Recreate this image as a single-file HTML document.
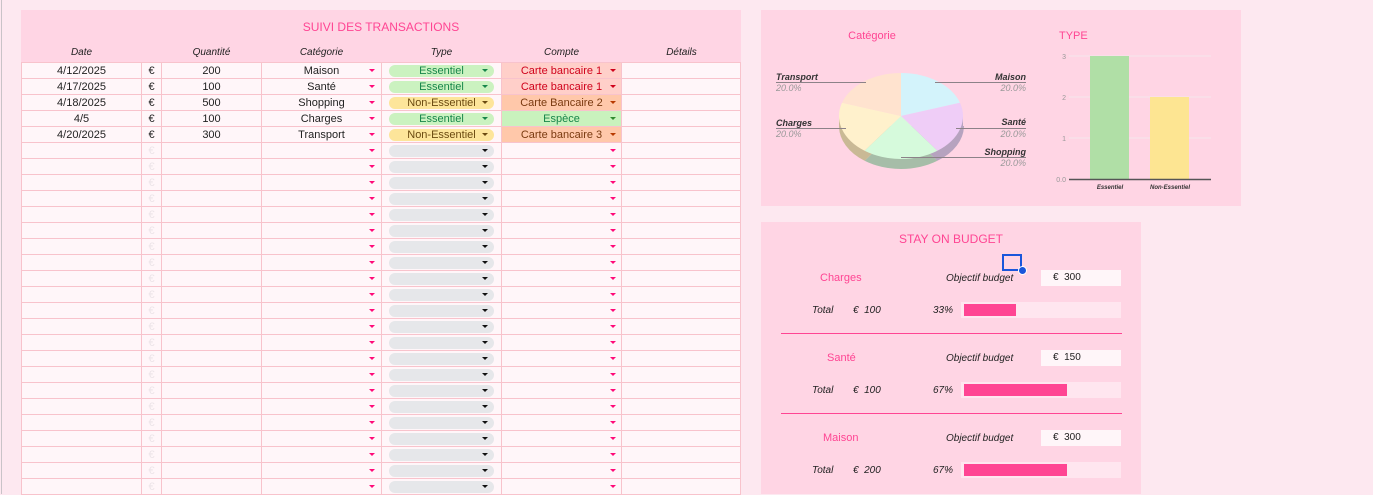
<!DOCTYPE html>
<html><head><meta charset="utf-8"><style>
*{margin:0;padding:0;box-sizing:border-box}
body{width:1373px;height:494px;overflow:hidden;background:#fde8f0;font-family:"Liberation Sans",sans-serif;position:relative;color:#222}
.abs{position:absolute}
#gl{left:1px;top:0;width:1px;height:494px;background:#c9c3c8}
#tp{left:21px;top:10px;width:720px;height:484px;background:#ffd5e4}
.title{color:#ff4593;font-size:12px;text-align:center}
.hdr{font-style:italic;font-size:10px;top:47px;text-align:center}
.row{position:absolute;left:21px;width:720px;height:17px;display:flex}
.row div{border:1px solid #f8c3cc;margin-right:-1px;margin-bottom:-1px;background:#fff6f9;height:17px;font-size:11px;text-align:center;line-height:16px;position:relative}
.c1{width:121px}.c2{width:21px}.c3{width:101px}.c4{width:121px}.c5{width:121px}.c6{width:121px}.c7{width:120px}
.tri{position:absolute;width:0;height:0;border-left:3px solid transparent;border-right:3px solid transparent;border-top:3px solid #ff0a78;top:6px}
.c4 .tri{right:6px}.c6 .tri{right:5px}
.pill{position:absolute;left:7px;top:2px;width:105px;height:12px;border-radius:6px;background:#e6e7ea;font-size:11px;line-height:12px;text-align:center}
.pill .tri{right:6px;top:4px;border-top-color:#111}
.ess{background:#cbf2c0;color:#17864a}.non{background:#fde59a;color:#6b4a10}
.faint{color:#ece4e8}
#cp{left:761px;top:10px;width:480px;height:196px;background:#ffd5e4}
#bp{left:761px;top:222px;width:380px;height:272px;background:#ffd5e4}
.lbl{font-size:11px}
.it{font-style:italic;font-size:10px}
.inp{background:#fff6f9;font-size:10px;line-height:16px;padding-left:12px;width:80px;height:16px}
.bb{background:#ffe6ef;width:160px;height:16px}
.bf{background:#ff4593;height:12px}
.dv{height:0;border-top:1px solid #ff4593;left:781px;width:341px}
</style></head><body>
<div class="abs" id="gl"></div>
<div class="abs" id="tp"></div>
<div class="abs title" style="left:21px;width:720px;top:20px">SUIVI DES TRANSACTIONS</div>
<div class="abs hdr" style="left:21px;width:121px">Date</div>
<div class="abs hdr" style="left:161px;width:101px">Quantité</div>
<div class="abs hdr" style="left:261px;width:121px">Catégorie</div>
<div class="abs hdr" style="left:381px;width:121px">Type</div>
<div class="abs hdr" style="left:501px;width:121px">Compte</div>
<div class="abs hdr" style="left:621px;width:121px">Détails</div>

<div class="row" style="top:62px"><div class="c1">4/12/2025</div><div class="c2">€</div><div class="c3">200</div><div class="c4">Maison<i class="tri"></i></div><div class="c5"><span class="pill ess">Essentiel<i class="tri" style="border-top-color:#17864a"></i></span></div><div class="c6" style="background:#ffcfc9;color:#d0021b">Carte bancaire 1<i class="tri" style="border-top-color:#d0021b"></i></div><div class="c7"></div></div>
<div class="row" style="top:78px"><div class="c1">4/17/2025</div><div class="c2">€</div><div class="c3">100</div><div class="c4">Santé<i class="tri"></i></div><div class="c5"><span class="pill ess">Essentiel<i class="tri" style="border-top-color:#17864a"></i></span></div><div class="c6" style="background:#ffcfc9;color:#d0021b">Carte bancaire 1<i class="tri" style="border-top-color:#d0021b"></i></div><div class="c7"></div></div>
<div class="row" style="top:94px"><div class="c1">4/18/2025</div><div class="c2">€</div><div class="c3">500</div><div class="c4">Shopping<i class="tri"></i></div><div class="c5"><span class="pill non">Non-Essentiel<i class="tri" style="border-top-color:#6b4a10"></i></span></div><div class="c6" style="background:#ffc8aa;color:#7a3a10">Carte Bancaire 2<i class="tri" style="border-top-color:#b83a00"></i></div><div class="c7"></div></div>
<div class="row" style="top:110px"><div class="c1">4/5</div><div class="c2">€</div><div class="c3">100</div><div class="c4">Charges<i class="tri"></i></div><div class="c5"><span class="pill ess">Essentiel<i class="tri" style="border-top-color:#17864a"></i></span></div><div class="c6" style="background:#c9f2bd;color:#17864a">Espèce<i class="tri" style="border-top-color:#2f8a2f"></i></div><div class="c7"></div></div>
<div class="row" style="top:126px"><div class="c1">4/20/2025</div><div class="c2">€</div><div class="c3">300</div><div class="c4">Transport<i class="tri"></i></div><div class="c5"><span class="pill non">Non-Essentiel<i class="tri" style="border-top-color:#6b4a10"></i></span></div><div class="c6" style="background:#ffc8aa;color:#7a3a10">Carte bancaire 3<i class="tri" style="border-top-color:#b83a00"></i></div><div class="c7"></div></div>
<div id="empty"></div>
<script>
var h='';for(var i=0;i<22;i++){h+='<div class="row" style="top:'+(142+i*16)+'px"><div class="c1"></div><div class="c2 faint">€</div><div class="c3"></div><div class="c4"><i class="tri"></i></div><div class="c5"><span class="pill"><i class="tri"></i></span></div><div class="c6"><i class="tri"></i></div><div class="c7"></div></div>';}
document.getElementById('empty').outerHTML=h;
</script>

<div class="abs" id="cp"></div>
<div class="abs title" style="left:820px;width:104px;top:30px;font-size:11px">Catégorie</div>
<div class="abs title" style="left:1059px;top:30px;font-size:11px">TYPE</div>
<svg class="abs" style="left:761px;top:10px" width="480" height="196" viewBox="761 10 480 196">
<g>
<path d="M901,126 L964,126 A62,43 0 0 1 937.4,160.8 Z" fill="#b6a3bf"/>
<path d="M901,126 L937.4,160.8 A62,43 0 0 1 864.6,160.8 Z" fill="#a6bda8"/>
<path d="M901,126 L864.6,160.8 A62,43 0 0 1 839,126 Z" fill="#c9b995"/>
<path d="M839,116 L839,126 L864,126 Z" fill="#c9b995"/>
<path d="M963,116 L963,126 L940,126 Z" fill="#b6a3bf"/>
<path d="M901,116 L901,73 A62,43 0 0 1 960,102.7 Z" fill="#d3f3fb"/>
<path d="M901,116 L960,102.7 A62,43 0 0 1 937.4,150.8 Z" fill="#efcdf7"/>
<path d="M901,116 L937.4,150.8 A62,43 0 0 1 864.6,150.8 Z" fill="#d6fadc"/>
<path d="M901,116 L864.6,150.8 A62,43 0 0 1 842,102.7 Z" fill="#fff1cc"/>
<path d="M901,116 L842,102.7 A62,43 0 0 1 901,73 Z" fill="#ffe3cf"/>
</g>
<g stroke="#8c8288" stroke-width="1">
<line x1="776" y1="82.5" x2="866" y2="82.5"/><line x1="935" y1="82.5" x2="1026" y2="82.5"/>
<line x1="776" y1="128.5" x2="846" y2="128.5"/><line x1="956" y1="128.5" x2="1026" y2="128.5"/>
<line x1="901" y1="157.5" x2="1026" y2="157.5"/>
</g>
<g font-family="Liberation Sans" font-style="italic" font-size="9">
<text x="776" y="80" fill="#333" font-weight="bold">Transport</text><text x="776" y="91" fill="#999">20.0%</text>
<text x="776" y="126" fill="#333" font-weight="bold">Charges</text><text x="776" y="137" fill="#999">20.0%</text>
<text x="1026" y="80" fill="#333" font-weight="bold" text-anchor="end">Maison</text><text x="1026" y="91" fill="#999" text-anchor="end">20.0%</text>
<text x="1026" y="125" fill="#333" font-weight="bold" text-anchor="end">Santé</text><text x="1026" y="137" fill="#999" text-anchor="end">20.0%</text>
<text x="1026" y="155" fill="#333" font-weight="bold" text-anchor="end">Shopping</text><text x="1026" y="166" fill="#999" text-anchor="end">20.0%</text>
</g>
<g stroke="#f4e6ec" stroke-width="1">
<line x1="1069" y1="56" x2="1211" y2="56"/><line x1="1069" y1="97" x2="1211" y2="97"/><line x1="1069" y1="138" x2="1211" y2="138"/>
</g>
<rect x="1090" y="56" width="39" height="123" fill="#b0dfa6"/>
<rect x="1150" y="97" width="39" height="82" fill="#fde592"/>
<line x1="1069" y1="179.5" x2="1211" y2="179.5" stroke="#555" stroke-width="1.5"/>
<g font-family="Liberation Sans" font-size="7" fill="#999" text-anchor="end">
<text x="1066" y="59">3</text><text x="1066" y="100">2</text><text x="1066" y="141">1</text><text x="1066" y="182">0.0</text>
</g>
<g font-family="Liberation Sans" font-style="italic" font-weight="bold" font-size="6" fill="#333" text-anchor="middle">
<text x="1110" y="189">Essentiel</text><text x="1170" y="189">Non-Essentiel</text>
</g>
</svg>

<div class="abs" id="bp"></div>
<div class="abs title" style="left:761px;width:380px;top:232px;font-size:12px">STAY ON BUDGET</div>

<div class="abs lbl" style="left:820px;top:272px;color:#ff4593">Charges</div>
<div class="abs it" style="left:946px;top:273px">Objectif budget</div>
<div class="abs inp" style="left:1041px;top:270px">€&nbsp; 300</div>
<div class="abs it" style="left:812px;top:305px">Total</div>
<div class="abs it" style="left:853px;top:305px">€&nbsp; 100</div>
<div class="abs it" style="left:933px;top:305px">33%</div>
<div class="abs bb" style="left:961px;top:302px"></div>
<div class="abs bf" style="left:964px;top:304px;width:52px"></div>
<div class="abs dv" style="top:333px"></div>

<div class="abs lbl" style="left:827px;top:352px;color:#ff4593">Santé</div>
<div class="abs it" style="left:946px;top:353px">Objectif budget</div>
<div class="abs inp" style="left:1041px;top:350px">€&nbsp; 150</div>
<div class="abs it" style="left:812px;top:385px">Total</div>
<div class="abs it" style="left:853px;top:385px">€&nbsp; 100</div>
<div class="abs it" style="left:933px;top:385px">67%</div>
<div class="abs bb" style="left:961px;top:382px"></div>
<div class="abs bf" style="left:964px;top:384px;width:103px"></div>
<div class="abs dv" style="top:413px"></div>

<div class="abs lbl" style="left:823px;top:432px;color:#ff4593">Maison</div>
<div class="abs it" style="left:946px;top:433px">Objectif budget</div>
<div class="abs inp" style="left:1041px;top:430px">€&nbsp; 300</div>
<div class="abs it" style="left:812px;top:465px">Total</div>
<div class="abs it" style="left:853px;top:465px">€&nbsp; 200</div>
<div class="abs it" style="left:933px;top:465px">67%</div>
<div class="abs bb" style="left:961px;top:462px"></div>
<div class="abs bf" style="left:964px;top:464px;width:103px"></div>

<div class="abs" style="left:1002px;top:254px;width:20px;height:17px;border:2px solid #1a56db"></div>
<div class="abs" style="left:1018px;top:266px;width:9px;height:9px;border-radius:50%;background:#1a56db;border:1px solid #fff"></div>
</body></html>
